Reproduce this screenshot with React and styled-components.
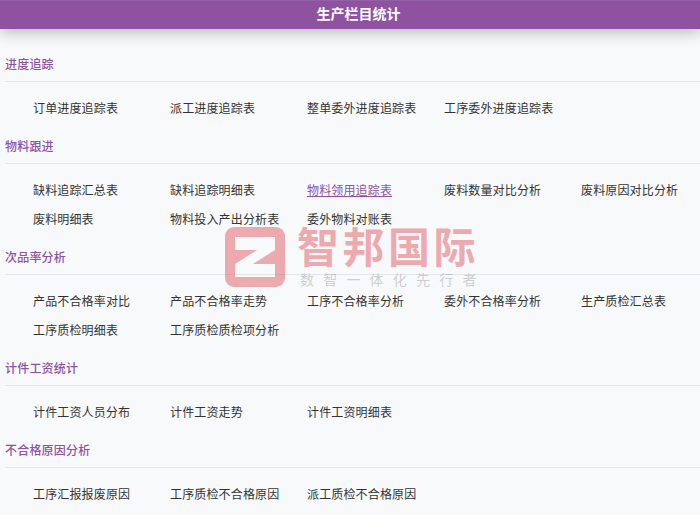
import React from "react";
import styled, { createGlobalStyle } from "styled-components";

const Global = createGlobalStyle`
  html, body { margin: 0; padding: 0; background: #f8f9fb; overflow: hidden; }
  body { font-family: "Noto Sans CJK SC", "Liberation Sans", sans-serif; }
`;
const Page = styled.div`
  position: relative;
  width: 700px;
  height: 515px;
  overflow: hidden;
  background: #f8f9fb;
`;
const Header = styled.header`
  height: 29px;
  line-height: 25px;
  padding-left: 17px;
  background: #8e52a1;
  border-top: 1px solid #9561a6;
  box-sizing: border-box;
  box-shadow: 0 2px 16px rgba(40, 40, 40, 0.36);
  color: #fff;
  text-align: center;
  font-size: 14px;
  font-weight: 700;
`;
const Main = styled.main`
  padding: 18px 0 0 5px;
`;
const Section = styled.section`
  padding-bottom: 7px;
`;
const Title = styled.h2`
  margin: 0;
  height: 34px;
  line-height: 34px;
  font-size: 12px;
  letter-spacing: 0.2px;
  font-weight: 500;
  color: #8e52a1;
  border-bottom: 1px solid #e4e5e8;
`;
const List = styled.ul`
  list-style: none;
  margin: 0;
  padding: 11px 0 0 28px;
  display: grid;
  grid-template-columns: repeat(5, 137px);
  grid-auto-rows: 29px;
`;
const Item = styled.li`
  line-height: 29px;
  font-size: 12px;
  letter-spacing: 0.15px;
  white-space: nowrap;
  color: ${(p) => (p.$active ? "#8e52a1" : "#333")};
  text-decoration: ${(p) => (p.$active ? "underline" : "none")};
`;
const Watermark = styled.div`
  position: absolute;
  left: 225px;
  top: 227px;
  display: flex;
  gap: 12px;
  pointer-events: none;
`;
const Brand = styled.div`
  display: flex;
  flex-direction: column;
`;
const BrandName = styled.div`
  font-size: 42px;
  line-height: 46px;
  letter-spacing: 3.5px;
  font-weight: 700;
  color: rgba(224, 89, 97, 0.5);
  white-space: nowrap;
  margin-top: -5px;
`;
const Slogan = styled.div`
  font-size: 14px;
  line-height: 18px;
  letter-spacing: 9.2px;
  color: rgba(120, 120, 125, 0.35);
  white-space: nowrap;
  margin: 2px 0 0 3px;
`;

const Logo = () => (
  <svg width="60" height="60" viewBox="0 0 60 60">
    <path
      fillRule="evenodd"
      d="M9 0H51A9 9 0 0 1 60 9V51A9 9 0 0 1 51 60H9A9 9 0 0 1 0 51V9A9 9 0 0 1 9 0ZM10 10V23H32L10 37V50H50V37H28L50 23V10Z"
      fill="rgba(224, 89, 97, 0.5)"
    />
  </svg>
);

const sections = [
  ["进度追踪", ["订单进度追踪表", "派工进度追踪表", "整单委外进度追踪表", "工序委外进度追踪表"]],
  ["物料跟进", ["缺料追踪汇总表", "缺料追踪明细表", "物料领用追踪表", "废料数量对比分析", "废料原因对比分析", "废料明细表", "物料投入产出分析表", "委外物料对账表"]],
  ["次品率分析", ["产品不合格率对比", "产品不合格率走势", "工序不合格率分析", "委外不合格率分析", "生产质检汇总表", "工序质检明细表", "工序质检质检项分析"]],
  ["计件工资统计", ["计件工资人员分布", "计件工资走势", "计件工资明细表"]],
  ["不合格原因分析", ["工序汇报报废原因", "工序质检不合格原因", "派工质检不合格原因"]],
];

export default function App() {
  return (
    <Page>
      <Global />
      <Header>生产栏目统计</Header>
      <Main>
        {sections.map(([title, items]) => (
          <Section key={title}>
            <Title>{title}</Title>
            <List>
              {items.map((it) => (
                <Item key={it} $active={it === "物料领用追踪表"}>{it}</Item>
              ))}
            </List>
          </Section>
        ))}
      </Main>
      <Watermark>
        <Logo />
        <Brand>
          <BrandName>智邦国际</BrandName>
          <Slogan>数智一体化先行者</Slogan>
        </Brand>
      </Watermark>
    </Page>
  );
}
